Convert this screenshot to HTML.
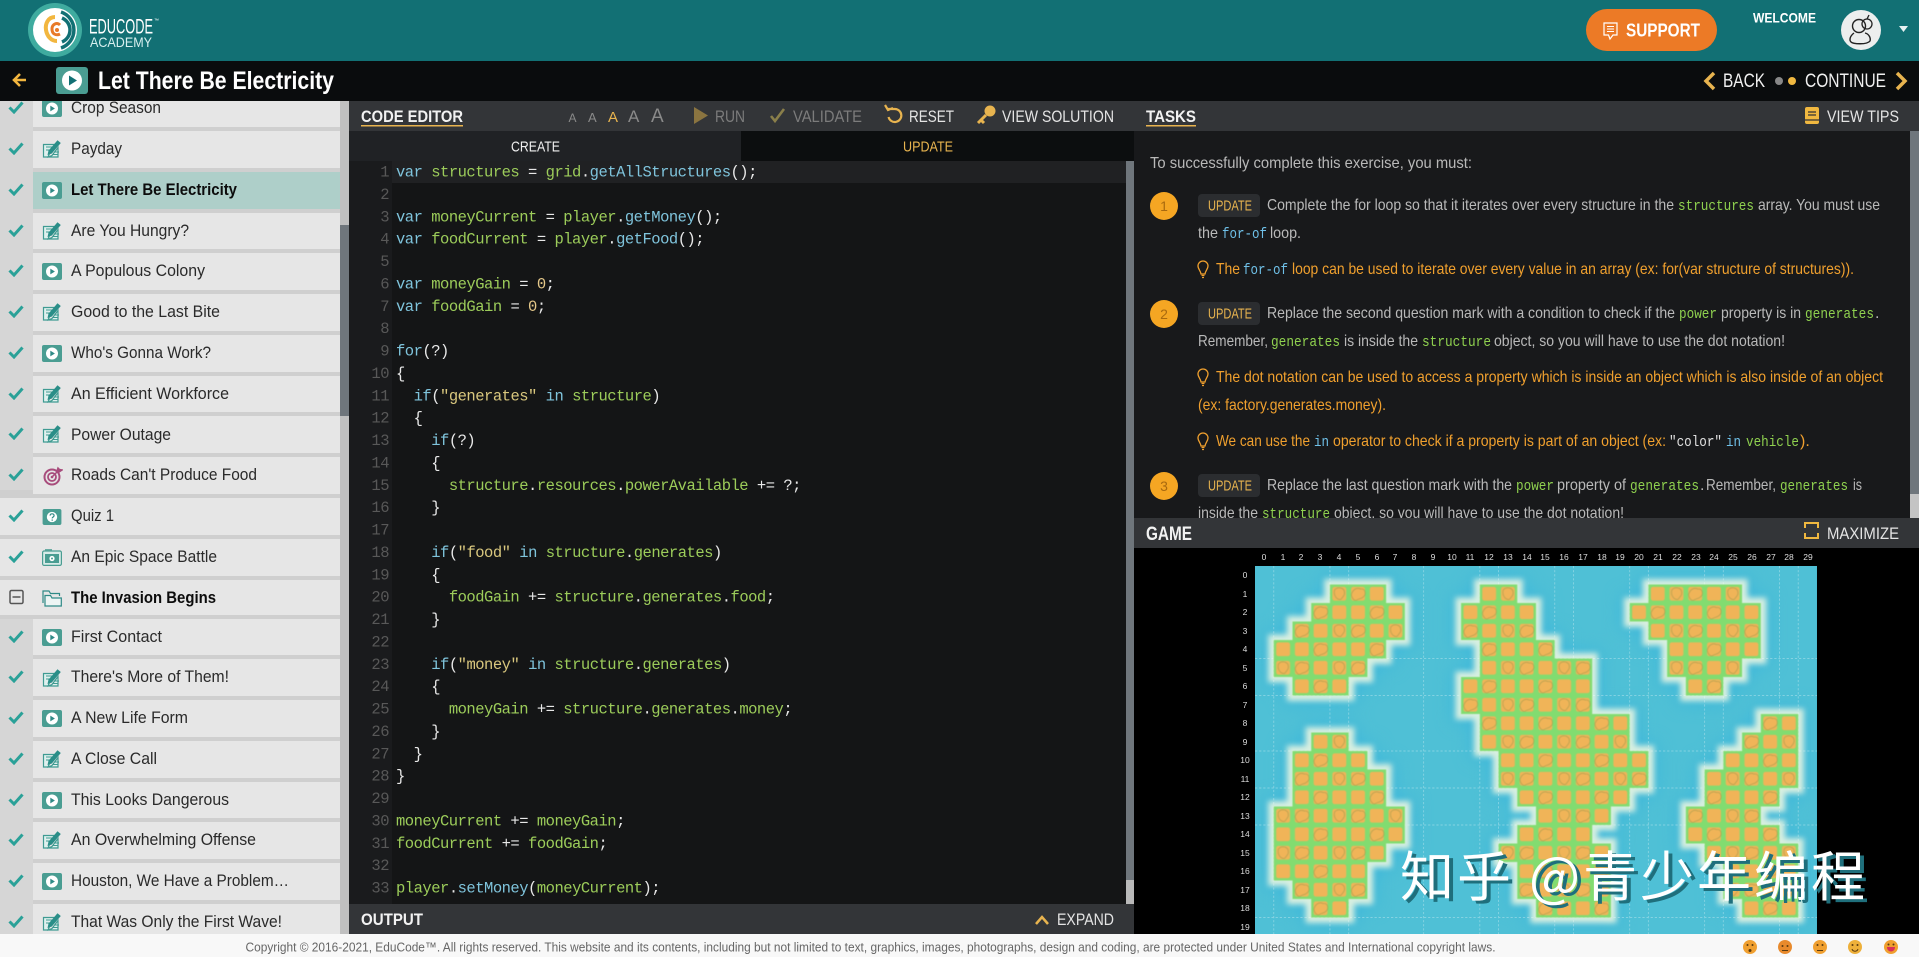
<!DOCTYPE html>
<html lang="en"><head><meta charset="utf-8"><title>Let There Be Electricity</title>
<style>
html,body{margin:0;padding:0;background:#000;width:1919px;height:957px;overflow:hidden}
svg{display:block;font-family:"Liberation Sans",sans-serif}
.it{font-size:17px;fill:#2a2a2a}
.b{font-weight:700;fill:#0c0c0c}
.c{font-family:"Liberation Mono",monospace;font-size:15.5px;letter-spacing:-.5px;fill:#e8e8e8;white-space:pre}
.n{font-family:"Liberation Mono",monospace;font-size:15.5px;letter-spacing:-.5px;fill:#585858;text-anchor:end}
.k{fill:#7fc4dc}.g{fill:#9ccc5a}.m{fill:#7fc4dc}.s{fill:#d9c77e}.v{fill:#e6c98a}
.h{font-size:17px;font-weight:700;fill:#f2f2f2}
.btn{font-size:17px;fill:#e4e4e4}
.dim{font-size:17px;fill:#7c7c7c}
.t{font-size:16px;fill:#b9b9b9}
.o{font-size:16px;fill:#f0a02e}
.cd{font-family:"Liberation Mono",monospace;font-size:15px}
.tg{fill:#8fd14f}.tk{fill:#6fc0e8}
.bd{font-size:14.5px;fill:#e8b44f}
.num{font-size:14px;fill:#a8690f;text-anchor:middle}
.gl{font-size:8.5px;fill:#ddd;text-anchor:middle}
</style></head><body>
<svg xmlns="http://www.w3.org/2000/svg" width="1919" height="957" viewBox="0 0 1919 957">
<defs>
<symbol id="play" viewBox="0 0 20 17"><rect width="20" height="17" rx="2" fill="#4a9d92"/><circle cx="10" cy="8.5" r="6" fill="#fff"/><path d="M8.3 5.6l4.6 2.9-4.6 2.9z" fill="#2f8a86"/></symbol>
<symbol id="edit" viewBox="0 0 20 20"><path d="M1.5 5.5h12l-6 9-1.5 3.500 4-1.500 6-8v9.500h-14.500z" fill="#dff0ee" stroke="#3f9b92" stroke-width="1.200"/><path d="M4 8h6M4 11h4M11 15.500h5M12 13h5" stroke="#3f9b92" stroke-width=".9" fill="none"/><path d="M15.500 1.200l3.300 2.800-9 10.500-4.300 1.500 1-4.400z" fill="#2a8e88"/></symbol>
<symbol id="target" viewBox="0 0 20 20"><circle cx="9" cy="11" r="7.500" fill="none" stroke="#a84c7c" stroke-width="2"/><circle cx="9" cy="11" r="4" fill="none" stroke="#a84c7c" stroke-width="1.800"/><circle cx="9" cy="11" r="1.300" fill="#a84c7c"/><path d="M9 11l7-7M14 5l1-3 1.500 1.500 2.500.5-3 2z" stroke="#a84c7c" stroke-width="1.500" fill="#a84c7c"/></symbol>
<symbol id="quiz" viewBox="0 0 20 17"><rect width="20" height="17" rx="2" fill="#4a9d92"/><circle cx="10" cy="8.500" r="5.500" fill="#fff"/><path d="M8 7c0-2.500 4.200-2.500 4.200 0 0 1.500-2 1.500-2 3M10.200 11.200v1.300" stroke="#2f8a86" stroke-width="1.300" fill="none"/></symbol>
<symbol id="video" viewBox="0 0 20 17"><rect x=".6" y="2" width="18.800" height="14.400" rx="1.500" fill="#d8ebe8" stroke="#4a9d92" stroke-width="1.200"/><rect x="3" y="5" width="14" height="9" fill="#4a9d92"/><circle cx="10" cy="9.500" r="2.600" fill="#fff"/><circle cx="10" cy="9.500" r="1" fill="#4a9d92"/><path d="M3 .8h7" stroke="#4a9d92" stroke-width="1.200"/></symbol>
<symbol id="folder" viewBox="0 0 20 18"><path d="M1 14V2h6l1.500 2.500h9V7" fill="none" stroke="#2f8a86" stroke-width="1.200"/><path d="M3 17V6.500h5.500l1.500 2.500h9.300v8z" fill="#edf5f4" stroke="#2f8a86" stroke-width="1.200"/></symbol>
<symbol id="chk" viewBox="0 0 16 13"><path d="M1.500 6.500l4.500 4.500 8.500-9.500" fill="none" stroke="#2aa198" stroke-width="3"/></symbol>
<symbol id="bulb" viewBox="0 0 12 19"><path d="M6 1a5 5 0 0 0-5 5c0 3 2.500 4.500 3 8h4c.5-3.500 3-5 3-8a5 5 0 0 0-5-5zM4.500 15.500h3M5 17.500h2" fill="none" stroke="#f0a02e" stroke-width="1.300"/></symbol>
<pattern id="cell" patternUnits="userSpaceOnUse" width="3" height="2">
<rect width="3" height="2" fill="#82dc70"/>
<rect x=".13" y=".13" width=".74" height=".74" rx=".12" fill="#f0b458"/><rect x="1.130" y=".13" width=".74" height=".74" rx=".12" fill="#f0b458"/><rect x="2.130" y=".13" width=".74" height=".74" rx=".12" fill="#f0b458"/>
<rect x=".13" y="1.130" width=".74" height=".74" rx=".12" fill="#f0b458"/><rect x="1.130" y="1.130" width=".74" height=".74" rx=".12" fill="#f0b458"/><rect x="2.130" y="1.130" width=".74" height=".74" rx=".12" fill="#f0b458"/>
<path d="M.14.55c.08-.28.3-.42.5-.3.22-.05.3.2.2.36-.15.2-.3.12-.42.24-.12.05-.25-.1-.28-.3zM2.140 1.550c.08-.28.3-.42.5-.3.22-.05.3.2.2.36-.15.2-.3.12-.42.24-.12.05-.25-.1-.28-.3zM1.250 1.300c.14-.18.38-.14.5 0 .1.28-.06.34-.16.5-.2.05-.42-.2-.34-.5z" fill="none" stroke="#a39a4c" stroke-opacity=".7" stroke-width=".045"/>
</pattern>
<g id="segs"><path d="M4 1h3v1h-3zM12 1h2v1h-2zM21 1h5v1h-5zM3 2h5v1h-5zM11 2h4v1h-4zM20 2h7v1h-7zM2 3h6v1h-6zM11 3h4v1h-4zM21 3h6v1h-6zM1 4h6v1h-6zM12 4h4v1h-4zM22 4h5v1h-5zM1 5h5v1h-5zM12 5h6v1h-6zM22 5h4v1h-4zM2 6h3v1h-3zM11 6h7v1h-7zM23 6h2v1h-2zM11 7h7v1h-7zM12 8h8v1h-8zM27 8h2v1h-2zM3 9h2v1h-2zM12 9h8v1h-8zM26 9h3v1h-3zM2 10h4v1h-4zM13 10h8v1h-8zM25 10h4v1h-4zM2 11h5v1h-5zM13 11h8v1h-8zM24 11h5v1h-5zM2 12h5v1h-5zM14 12h6v1h-6zM24 12h4v1h-4zM1 13h7v1h-7zM15 13h4v1h-4zM23 13h4v1h-4zM1 14h7v1h-7zM14 14h4v1h-4zM23 14h5v1h-5zM1 15h6v1h-6zM13 15h6v1h-6zM24 15h5v1h-5zM1 16h5v1h-5zM14 16h5v1h-5zM25 16h4v1h-4zM2 17h4v1h-4zM14 17h5v1h-5zM25 17h4v1h-4zM3 18h2v1h-2zM15 18h4v1h-4zM26 18h3v1h-3z"/></g>
<filter id="bl" x="-5%" y="-5%" width="110%" height="110%" color-interpolation-filters="sRGB"><feGaussianBlur stdDeviation=".16"/></filter>
<filter id="bl2" x="-5%" y="-5%" width="110%" height="110%" color-interpolation-filters="sRGB"><feGaussianBlur stdDeviation=".5"/></filter>
<filter id="bl3" x="-2%" y="-2%" width="104%" height="104%" color-interpolation-filters="sRGB"><feGaussianBlur stdDeviation=".03"/></filter>
<clipPath id="side"><rect x="0" y="101" width="349" height="833"/></clipPath>
<clipPath id="task"><rect x="1134" y="131" width="785" height="387"/></clipPath>
<clipPath id="map"><rect x="0" y="0" width="30" height="19.900"/></clipPath>
</defs>

<rect width="1919" height="957" fill="#000"/>

<!-- sidebar -->
<g clip-path="url(#side)">
<rect y="101" width="349" height="833" fill="#cfcfcf"/>
<rect x="340" y="101" width="9" height="833" fill="#c0c0c0"/>
<rect x="340" y="225" width="9" height="191" fill="#6f767c"/>
<rect x="0" y="90" width="33" height="400" fill="#d6d6d6"/><rect x="0" y="619" width="33" height="320" fill="#d6d6d6"/>
<g fill="#e6e6e6">
<rect x="33" y="90" width="307" height="37"/><rect x="33" y="131" width="307" height="37"/><rect x="33" y="213" width="307" height="36"/><rect x="33" y="253" width="307" height="37"/><rect x="33" y="294" width="307" height="37"/><rect x="33" y="335" width="307" height="37"/><rect x="33" y="376" width="307" height="36"/><rect x="33" y="416" width="307" height="37"/><rect x="33" y="457" width="307" height="37"/>
<rect x="0" y="498" width="340" height="37"/><rect x="0" y="539" width="340" height="37"/><rect x="0" y="580" width="340" height="35"/>
<rect x="33" y="619" width="307" height="36"/><rect x="33" y="659" width="307" height="37"/><rect x="33" y="700" width="307" height="37"/><rect x="33" y="741" width="307" height="37"/><rect x="33" y="782" width="307" height="36"/><rect x="33" y="822" width="307" height="37"/><rect x="33" y="863" width="307" height="37"/><rect x="33" y="904" width="307" height="37"/>
</g>
<rect x="33" y="172" width="307" height="37" fill="#aecfc9"/>
<use href="#chk" x="8" y="101" width="16" height="13"/><use href="#chk" x="8" y="142" width="16" height="13"/><use href="#chk" x="8" y="183" width="16" height="13"/><use href="#chk" x="8" y="224" width="16" height="13"/><use href="#chk" x="8" y="264" width="16" height="13"/><use href="#chk" x="8" y="305" width="16" height="13"/><use href="#chk" x="8" y="346" width="16" height="13"/><use href="#chk" x="8" y="387" width="16" height="13"/><use href="#chk" x="8" y="427" width="16" height="13"/><use href="#chk" x="8" y="468" width="16" height="13"/><use href="#chk" x="8" y="509" width="16" height="13"/><use href="#chk" x="8" y="550" width="16" height="13"/><use href="#chk" x="8" y="630" width="16" height="13"/><use href="#chk" x="8" y="670" width="16" height="13"/><use href="#chk" x="8" y="711" width="16" height="13"/><use href="#chk" x="8" y="752" width="16" height="13"/><use href="#chk" x="8" y="793" width="16" height="13"/><use href="#chk" x="8" y="833" width="16" height="13"/><use href="#chk" x="8" y="874" width="16" height="13"/><use href="#chk" x="8" y="915" width="16" height="13"/>
<rect x="10" y="590.500" width="13" height="13" rx="1.500" fill="none" stroke="#555" stroke-width="1.500"/><path d="M12.500 597h8" stroke="#555" stroke-width="1.500"/>
<use href="#play" x="42" y="100" width="20" height="17"/><use href="#edit" x="42" y="139" width="20" height="20"/><use href="#play" x="42" y="182" width="20" height="17"/><use href="#edit" x="42" y="221" width="20" height="20"/><use href="#play" x="42" y="263" width="20" height="17"/><use href="#edit" x="42" y="302" width="20" height="20"/><use href="#play" x="42" y="345" width="20" height="17"/><use href="#edit" x="42" y="384" width="20" height="20"/><use href="#edit" x="42" y="424" width="20" height="20"/><use href="#target" x="43" y="466" width="20" height="20"/><use href="#quiz" x="42" y="509" width="20" height="16"/><use href="#video" x="42" y="549" width="20" height="17"/><use href="#folder" x="42" y="589" width="20" height="18"/><use href="#play" x="42" y="629" width="20" height="17"/><use href="#edit" x="42" y="668" width="20" height="20"/><use href="#play" x="42" y="710" width="20" height="17"/><use href="#edit" x="42" y="749" width="20" height="20"/><use href="#play" x="42" y="792" width="20" height="17"/><use href="#edit" x="42" y="830" width="20" height="20"/><use href="#play" x="42" y="873" width="20" height="17"/><use href="#edit" x="42" y="912" width="20" height="20"/>
<text class="it" x="71" y="113" textLength="90" lengthAdjust="spacingAndGlyphs">Crop Season</text>
<text class="it" x="71" y="154" textLength="51" lengthAdjust="spacingAndGlyphs">Payday</text>
<text class="it b" x="71" y="195" textLength="166" lengthAdjust="spacingAndGlyphs">Let There Be Electricity</text>
<text class="it" x="71" y="236" textLength="118" lengthAdjust="spacingAndGlyphs">Are You Hungry?</text>
<text class="it" x="71" y="276" textLength="134" lengthAdjust="spacingAndGlyphs">A Populous Colony</text>
<text class="it" x="71" y="317" textLength="149" lengthAdjust="spacingAndGlyphs">Good to the Last Bite</text>
<text class="it" x="71" y="358" textLength="140" lengthAdjust="spacingAndGlyphs">Who's Gonna Work?</text>
<text class="it" x="71" y="399" textLength="158" lengthAdjust="spacingAndGlyphs">An Efficient Workforce</text>
<text class="it" x="71" y="440" textLength="100" lengthAdjust="spacingAndGlyphs">Power Outage</text>
<text class="it" x="71" y="480" textLength="186" lengthAdjust="spacingAndGlyphs">Roads Can't Produce Food</text>
<text class="it" x="71" y="521" textLength="43" lengthAdjust="spacingAndGlyphs">Quiz 1</text>
<text class="it" x="71" y="562" textLength="146" lengthAdjust="spacingAndGlyphs">An Epic Space Battle</text>
<text class="it b" x="71" y="603" textLength="145" lengthAdjust="spacingAndGlyphs">The Invasion Begins</text>
<text class="it" x="71" y="642" textLength="91" lengthAdjust="spacingAndGlyphs">First Contact</text>
<text class="it" x="71" y="682" textLength="158" lengthAdjust="spacingAndGlyphs">There's More of Them!</text>
<text class="it" x="71" y="723" textLength="117" lengthAdjust="spacingAndGlyphs">A New Life Form</text>
<text class="it" x="71" y="764" textLength="86" lengthAdjust="spacingAndGlyphs">A Close Call</text>
<text class="it" x="71" y="805" textLength="158" lengthAdjust="spacingAndGlyphs">This Looks Dangerous</text>
<text class="it" x="71" y="845" textLength="185" lengthAdjust="spacingAndGlyphs">An Overwhelming Offense</text>
<text class="it" x="71" y="886" textLength="218" lengthAdjust="spacingAndGlyphs">Houston, We Have a Problem…</text>
<text class="it" x="71" y="927" textLength="211" lengthAdjust="spacingAndGlyphs">That Was Only the First Wave!</text>
</g>

<!-- top bars -->
<rect width="1919" height="61" fill="#127074"/>
<rect y="61" width="1919" height="40" fill="#0a0c0d"/>
<circle cx="55" cy="30" r="27" fill="#3fab9f"/>
<circle cx="55" cy="30" r="22" fill="#fff"/>
<path d="M61 12a19 19 0 0 1 0 36M62 18a13 13 0 0 1 0 24" fill="none" stroke="#127074" stroke-width="3.500"/>
<path d="M55 17c-7 0-10 7-9 13s5 11 11 11" fill="none" stroke="#f2b63f" stroke-width="4"/>
<path d="M60 25c-3-3-8-1-8 4s4 7 8 5" fill="none" stroke="#e87a28" stroke-width="3"/>
<circle cx="57" cy="30" r="2" fill="#e87a28"/>
<text x="89" y="33.500" font-size="21" fill="#fff" textLength="64" lengthAdjust="spacingAndGlyphs">EDUCODE</text>
<text x="154" y="22" font-size="5" fill="#fff">™</text>
<text x="90" y="47" font-size="14" fill="#d8efef" textLength="62" lengthAdjust="spacingAndGlyphs">ACADEMY</text>

<rect x="1586" y="9" width="131" height="42" rx="21" fill="#ec7a26"/>
<path d="M1604 23h13v12h-4l-3 4-1.500-4h-4.500z" fill="none" stroke="#fff" stroke-width="1.200"/><path d="M1607 26.500h7M1607 29h7M1607 31.500h7" stroke="#fff" stroke-width="1"/>
<text x="1626" y="36.500" font-size="18" font-weight="700" fill="#fff" textLength="74" lengthAdjust="spacingAndGlyphs">SUPPORT</text>
<text x="1753" y="22.500" font-size="13.500" font-weight="700" fill="#fff" textLength="63" lengthAdjust="spacingAndGlyphs">WELCOME</text>
<circle cx="1861" cy="30" r="20" fill="#eceeee"/>
<circle cx="1859" cy="26" r="6.500" fill="none" stroke="#222" stroke-width="1.400"/><path d="M1854 33c-4 3-5 7-3 9s16 3 19-1c1-3-1-7-5-8" fill="none" stroke="#222" stroke-width="1.400"/><circle cx="1867" cy="24" r="5" fill="none" stroke="#222" stroke-width="1.300"/><path d="M1867 19l2-4" stroke="#222" stroke-width="1.300"/>
<path d="M1899 26h9l-4.500 6z" fill="#e6f2f2"/>

<path d="M26 80H14M20 74l-6 6 6 6" fill="none" stroke="#f3b73f" stroke-width="2.600"/>
<rect x="56" y="67" width="32" height="27" rx="3" fill="#4a9d92"/><circle cx="72" cy="80.500" r="10" fill="#fff"/><path d="M69 75.500l8 5-8 5z" fill="#127074"/>
<text x="98" y="89" font-size="25" font-weight="700" fill="#fff" textLength="236" lengthAdjust="spacingAndGlyphs">Let There Be Electricity</text>
<path d="M1714 73l-8 8 8 8" fill="none" stroke="#e8b44f" stroke-width="3.500"/>
<text x="1723" y="87" font-size="19" fill="#f0f0f0" textLength="42" lengthAdjust="spacingAndGlyphs">BACK</text>
<circle cx="1779" cy="81" r="4" fill="#888"/><circle cx="1792" cy="81" r="4" fill="#f0b840"/>
<text x="1805" y="87" font-size="19" fill="#f0f0f0" textLength="81" lengthAdjust="spacingAndGlyphs">CONTINUE</text>
<path d="M1897 73l8 8-8 8" fill="none" stroke="#e8b44f" stroke-width="3.500"/>

<!-- editor -->
<rect x="349" y="101" width="1570" height="30" fill="#333538"/>
<text class="h" x="361" y="122" textLength="102" lengthAdjust="spacingAndGlyphs">CODE EDITOR</text>
<rect x="361" y="125" width="102" height="1.500" fill="#e8b44f"/>
<text x="568.500" y="122" font-size="12" fill="#8a8a8a">A</text>
<text x="588" y="122" font-size="13" fill="#8a8a8a">A</text>
<text x="608" y="122" font-size="15" fill="#e8b44f">A</text>
<text x="628" y="122" font-size="17" fill="#8a8a8a">A</text>
<text x="651" y="122" font-size="19" fill="#8a8a8a">A</text>
<path d="M694 107l14 8.500-14 8.500z" fill="#8a7440"/>
<text class="dim" x="715" y="122" textLength="30" lengthAdjust="spacingAndGlyphs">RUN</text>
<path d="M771 116l4 5 9-12" fill="none" stroke="#8a7f4a" stroke-width="2.600"/>
<text class="dim" x="793" y="122" textLength="69" lengthAdjust="spacingAndGlyphs">VALIDATE</text>
<path d="M888 109h7a6.500 6.500 0 1 1-6.500 8M885 105l3 5 5-2" fill="none" stroke="#e8b44f" stroke-width="2.200"/>
<text class="btn" x="909" y="122" textLength="45" lengthAdjust="spacingAndGlyphs">RESET</text>
<circle cx="990" cy="111" r="5.500" fill="#e8b44f"/><path d="M986 115l-8 8M981 120l3 3" stroke="#e8b44f" stroke-width="3"/>
<text class="btn" x="1002" y="122" textLength="112" lengthAdjust="spacingAndGlyphs">VIEW SOLUTION</text>

<rect x="349" y="131" width="392" height="30" fill="#202225"/>
<rect x="741" y="131" width="393" height="30" fill="#0c0e0f"/>
<text x="511" y="151.500" font-size="15" fill="#f0f0f0" textLength="49" lengthAdjust="spacingAndGlyphs">CREATE</text>
<text x="903" y="151.500" font-size="15" fill="#e8b44f" textLength="50" lengthAdjust="spacingAndGlyphs">UPDATE</text>

<rect x="349" y="161" width="785" height="743" fill="#141516"/>
<rect x="349" y="161" width="43" height="743" fill="#1a1b1d"/>
<rect x="392" y="161" width="734" height="22" fill="#202123"/>
<rect x="1126" y="161" width="8" height="719" fill="#6f767c"/><rect x="1126" y="880" width="8" height="24" fill="#b9b9b9"/>
<g transform="translate(0 -1)">
<text class="n" x="389" y="177.500">1</text><text class="n" x="389" y="199.900">2</text><text class="n" x="389" y="222.300">3</text><text class="n" x="389" y="244.600">4</text><text class="n" x="389" y="267">5</text><text class="n" x="389" y="289.400">6</text><text class="n" x="389" y="311.800">7</text><text class="n" x="389" y="334.200">8</text><text class="n" x="389" y="356.500">9</text><text class="n" x="389" y="378.900">10</text><text class="n" x="389" y="401.300">11</text><text class="n" x="389" y="423.700">12</text><text class="n" x="389" y="446">13</text><text class="n" x="389" y="468.400">14</text><text class="n" x="389" y="490.800">15</text><text class="n" x="389" y="513.200">16</text><text class="n" x="389" y="535.600">17</text><text class="n" x="389" y="557.900">18</text><text class="n" x="389" y="580.300">19</text><text class="n" x="389" y="602.700">20</text><text class="n" x="389" y="625.100">21</text><text class="n" x="389" y="647.400">22</text><text class="n" x="389" y="669.800">23</text><text class="n" x="389" y="692.200">24</text><text class="n" x="389" y="714.600">25</text><text class="n" x="389" y="737">26</text><text class="n" x="389" y="759.300">27</text><text class="n" x="389" y="781.700">28</text><text class="n" x="389" y="804.100">29</text><text class="n" x="389" y="826.500">30</text><text class="n" x="389" y="848.800">31</text><text class="n" x="389" y="871.200">32</text><text class="n" x="389" y="893.600">33</text>
<text class="c" x="396" y="177.500" xml:space="preserve"><tspan class="k">var</tspan> <tspan class="g">structures</tspan> = <tspan class="g">grid</tspan>.<tspan class="m">getAllStructures</tspan>();</text>
<text class="c" x="396" y="222.300" xml:space="preserve"><tspan class="k">var</tspan> <tspan class="g">moneyCurrent</tspan> = <tspan class="g">player</tspan>.<tspan class="m">getMoney</tspan>();</text>
<text class="c" x="396" y="244.600" xml:space="preserve"><tspan class="k">var</tspan> <tspan class="g">foodCurrent</tspan> = <tspan class="g">player</tspan>.<tspan class="m">getFood</tspan>();</text>
<text class="c" x="396" y="289.400" xml:space="preserve"><tspan class="k">var</tspan> <tspan class="g">moneyGain</tspan> = <tspan class="v">0</tspan>;</text>
<text class="c" x="396" y="311.800" xml:space="preserve"><tspan class="k">var</tspan> <tspan class="g">foodGain</tspan> = <tspan class="v">0</tspan>;</text>
<text class="c" x="396" y="356.500" xml:space="preserve"><tspan class="k">for</tspan>(?)</text>
<text class="c" x="396" y="378.900" xml:space="preserve">{</text>
<text class="c" x="396" y="401.300" xml:space="preserve">  <tspan class="k">if</tspan>(<tspan class="s">"generates"</tspan> <tspan class="k">in</tspan> <tspan class="g">structure</tspan>)</text>
<text class="c" x="396" y="423.700" xml:space="preserve">  {</text>
<text class="c" x="396" y="446" xml:space="preserve">    <tspan class="k">if</tspan>(?)</text>
<text class="c" x="396" y="468.400" xml:space="preserve">    {</text>
<text class="c" x="396" y="490.800" xml:space="preserve">      <tspan class="g">structure</tspan>.<tspan class="g">resources</tspan>.<tspan class="g">powerAvailable</tspan> += ?;</text>
<text class="c" x="396" y="513.200" xml:space="preserve">    }</text>
<text class="c" x="396" y="557.900" xml:space="preserve">    <tspan class="k">if</tspan>(<tspan class="s">"food"</tspan> <tspan class="k">in</tspan> <tspan class="g">structure</tspan>.<tspan class="g">generates</tspan>)</text>
<text class="c" x="396" y="580.300" xml:space="preserve">    {</text>
<text class="c" x="396" y="602.700" xml:space="preserve">      <tspan class="g">foodGain</tspan> += <tspan class="g">structure</tspan>.<tspan class="g">generates</tspan>.<tspan class="g">food</tspan>;</text>
<text class="c" x="396" y="625.100" xml:space="preserve">    }</text>
<text class="c" x="396" y="669.800" xml:space="preserve">    <tspan class="k">if</tspan>(<tspan class="s">"money"</tspan> <tspan class="k">in</tspan> <tspan class="g">structure</tspan>.<tspan class="g">generates</tspan>)</text>
<text class="c" x="396" y="692.200" xml:space="preserve">    {</text>
<text class="c" x="396" y="714.600" xml:space="preserve">      <tspan class="g">moneyGain</tspan> += <tspan class="g">structure</tspan>.<tspan class="g">generates</tspan>.<tspan class="g">money</tspan>;</text>
<text class="c" x="396" y="737" xml:space="preserve">    }</text>
<text class="c" x="396" y="759.300" xml:space="preserve">  }</text>
<text class="c" x="396" y="781.700" xml:space="preserve">}</text>
<text class="c" x="396" y="826.500" xml:space="preserve"><tspan class="g">moneyCurrent</tspan> += <tspan class="g">moneyGain</tspan>;</text>
<text class="c" x="396" y="848.800" xml:space="preserve"><tspan class="g">foodCurrent</tspan> += <tspan class="g">foodGain</tspan>;</text>
<text class="c" x="396" y="893.600" xml:space="preserve"><tspan class="g">player</tspan>.<tspan class="m">setMoney</tspan>(<tspan class="g">moneyCurrent</tspan>);</text>
</g>

<rect x="349" y="904" width="785" height="30" fill="#333538"/>
<text class="h" x="361" y="925" textLength="62" lengthAdjust="spacingAndGlyphs">OUTPUT</text>
<path d="M1036 924l6-7 6 7" fill="none" stroke="#e8b44f" stroke-width="2.500"/>
<text class="btn" x="1057" y="925" textLength="57" lengthAdjust="spacingAndGlyphs">EXPAND</text>

<!-- tasks -->
<text class="h" x="1146" y="122" textLength="50" lengthAdjust="spacingAndGlyphs">TASKS</text>
<rect x="1146" y="125" width="50" height="1.500" fill="#e8b44f"/>
<rect x="1805" y="107" width="14" height="17" rx="2" fill="#f0b840"/><path d="M1808 112h8M1808 115h8M1805 120h14" stroke="#333" stroke-width="1.200"/>
<text class="btn" x="1827" y="122" textLength="72" lengthAdjust="spacingAndGlyphs">VIEW TIPS</text>

<rect x="1134" y="131" width="785" height="387" fill="#18191b"/>
<rect x="1910" y="131" width="9" height="363" fill="#6f767c"/><rect x="1910" y="494" width="9" height="24" fill="#c4c4c4"/>
<g clip-path="url(#task)">
<text class="t" x="1150" y="168" textLength="322" lengthAdjust="spacingAndGlyphs">To successfully complete this exercise, you must:</text>

<circle cx="1164" cy="206" r="14" fill="#f5a623"/><text class="num" x="1164" y="211">1</text>
<rect x="1198" y="194" width="62" height="23" rx="4" fill="#2b2d30"/><text class="bd" x="1208" y="210.500" textLength="44" lengthAdjust="spacingAndGlyphs">UPDATE</text>
<text class="t" x="1267" y="210" textLength="407" lengthAdjust="spacingAndGlyphs">Complete the for loop so that it iterates over every structure in the</text>
<text class="cd tg" x="1678" y="210" textLength="76" lengthAdjust="spacingAndGlyphs">structures</text>
<text class="t" x="1758" y="210" textLength="122" lengthAdjust="spacingAndGlyphs">array. You must use</text>
<text class="t" x="1198" y="238" textLength="20" lengthAdjust="spacingAndGlyphs">the</text>
<text class="cd tk" x="1222" y="238" textLength="45" lengthAdjust="spacingAndGlyphs">for-of</text>
<text class="t" x="1270" y="238" textLength="31" lengthAdjust="spacingAndGlyphs">loop.</text>
<use href="#bulb" x="1197" y="260" width="12" height="19"/>
<text class="o" x="1216" y="274" textLength="24" lengthAdjust="spacingAndGlyphs">The</text>
<text class="cd tk" x="1243" y="274" textLength="45" lengthAdjust="spacingAndGlyphs">for-of</text>
<text class="o" x="1292" y="274" textLength="562" lengthAdjust="spacingAndGlyphs">loop can be used to iterate over every value in an array (ex: for(var structure of structures)).</text>

<circle cx="1164" cy="314" r="14" fill="#f5a623"/><text class="num" x="1164" y="319">2</text>
<rect x="1198" y="302" width="62" height="23" rx="4" fill="#2b2d30"/><text class="bd" x="1208" y="318.500" textLength="44" lengthAdjust="spacingAndGlyphs">UPDATE</text>
<text class="t" x="1267" y="318" textLength="408" lengthAdjust="spacingAndGlyphs">Replace the second question mark with a condition to check if the</text>
<text class="cd tg" x="1679" y="318" textLength="38" lengthAdjust="spacingAndGlyphs">power</text>
<text class="t" x="1721" y="318" textLength="80" lengthAdjust="spacingAndGlyphs">property is in</text>
<text class="cd tg" x="1805" y="318" textLength="69" lengthAdjust="spacingAndGlyphs">generates</text>
<text class="t" x="1875" y="318">.</text>
<text class="t" x="1198" y="346" textLength="70" lengthAdjust="spacingAndGlyphs">Remember,</text>
<text class="cd tg" x="1271" y="346" textLength="69" lengthAdjust="spacingAndGlyphs">generates</text>
<text class="t" x="1344" y="346" textLength="74" lengthAdjust="spacingAndGlyphs">is inside the</text>
<text class="cd tg" x="1422" y="346" textLength="69" lengthAdjust="spacingAndGlyphs">structure</text>
<text class="t" x="1494" y="346" textLength="291" lengthAdjust="spacingAndGlyphs">object, so you will have to use the dot notation!</text>
<use href="#bulb" x="1197" y="368" width="12" height="19"/>
<text class="o" x="1216" y="382" textLength="667" lengthAdjust="spacingAndGlyphs">The dot notation can be used to access a property which is inside an object which is also inside of an object</text>
<text class="o" x="1198" y="410" textLength="188" lengthAdjust="spacingAndGlyphs">(ex: factory.generates.money).</text>
<use href="#bulb" x="1197" y="432" width="12" height="19"/>
<text class="o" x="1216" y="446" textLength="94" lengthAdjust="spacingAndGlyphs">We can use the</text>
<text class="cd tk" x="1314" y="446" textLength="15" lengthAdjust="spacingAndGlyphs">in</text>
<text class="o" x="1333" y="446" textLength="333" lengthAdjust="spacingAndGlyphs">operator to check if a property is part of an object (ex:</text>
<text class="cd" fill="#e0e0e0" x="1669" y="446" textLength="53" lengthAdjust="spacingAndGlyphs">"color"</text>
<text class="cd tk" x="1726" y="446" textLength="15" lengthAdjust="spacingAndGlyphs">in</text>
<text class="cd tg" x="1746" y="446" textLength="53" lengthAdjust="spacingAndGlyphs">vehicle</text>
<text class="o" x="1800" y="446">).</text>

<circle cx="1164" cy="486" r="14" fill="#f5a623"/><text class="num" x="1164" y="491">3</text>
<rect x="1198" y="474" width="62" height="23" rx="4" fill="#2b2d30"/><text class="bd" x="1208" y="490.500" textLength="44" lengthAdjust="spacingAndGlyphs">UPDATE</text>
<text class="t" x="1267" y="490" textLength="245" lengthAdjust="spacingAndGlyphs">Replace the last question mark with the</text>
<text class="cd tg" x="1516" y="490" textLength="38" lengthAdjust="spacingAndGlyphs">power</text>
<text class="t" x="1557" y="490" textLength="69" lengthAdjust="spacingAndGlyphs">property of</text>
<text class="cd tg" x="1630" y="490" textLength="69" lengthAdjust="spacingAndGlyphs">generates</text>
<text class="t" x="1700" y="490">.</text>
<text class="t" x="1706" y="490" textLength="70" lengthAdjust="spacingAndGlyphs">Remember,</text>
<text class="cd tg" x="1780" y="490" textLength="68" lengthAdjust="spacingAndGlyphs">generates</text>
<text class="t" x="1853" y="490" textLength="9" lengthAdjust="spacingAndGlyphs">is</text>
<text class="t" x="1198" y="518" textLength="60" lengthAdjust="spacingAndGlyphs">inside the</text>
<text class="cd tg" x="1262" y="518" textLength="68" lengthAdjust="spacingAndGlyphs">structure</text>
<text class="t" x="1334" y="518" textLength="290" lengthAdjust="spacingAndGlyphs">object, so you will have to use the dot notation!</text>
</g>

<!-- game -->
<rect x="1134" y="518" width="785" height="30" fill="#333538"/>
<text class="h" x="1146" y="540" style="font-size:19px" textLength="46" lengthAdjust="spacingAndGlyphs">GAME</text>
<path d="M1805 528v-5h13v5M1805 533v5h13v-5" fill="none" stroke="#f0b840" stroke-width="2"/>
<text class="btn" x="1827" y="539" textLength="72" lengthAdjust="spacingAndGlyphs">MAXIMIZE</text>
<rect x="1134" y="548" width="785" height="386" fill="#000"/>
<g class="gl"><text class="gl" x="1264" y="560">0</text><text class="gl" x="1283" y="560">1</text><text class="gl" x="1301" y="560">2</text><text class="gl" x="1320" y="560">3</text><text class="gl" x="1339" y="560">4</text><text class="gl" x="1358" y="560">5</text><text class="gl" x="1377" y="560">6</text><text class="gl" x="1395" y="560">7</text><text class="gl" x="1414" y="560">8</text><text class="gl" x="1433" y="560">9</text><text class="gl" x="1452" y="560">10</text><text class="gl" x="1470" y="560">11</text><text class="gl" x="1489" y="560">12</text><text class="gl" x="1508" y="560">13</text><text class="gl" x="1527" y="560">14</text><text class="gl" x="1545" y="560">15</text><text class="gl" x="1564" y="560">16</text><text class="gl" x="1583" y="560">17</text><text class="gl" x="1602" y="560">18</text><text class="gl" x="1620" y="560">19</text><text class="gl" x="1639" y="560">20</text><text class="gl" x="1658" y="560">21</text><text class="gl" x="1677" y="560">22</text><text class="gl" x="1696" y="560">23</text><text class="gl" x="1714" y="560">24</text><text class="gl" x="1733" y="560">25</text><text class="gl" x="1752" y="560">26</text><text class="gl" x="1771" y="560">27</text><text class="gl" x="1789" y="560">28</text><text class="gl" x="1808" y="560">29</text>
<text class="gl" x="1245" y="578">0</text><text class="gl" x="1245" y="597">1</text><text class="gl" x="1245" y="615">2</text><text class="gl" x="1245" y="634">3</text><text class="gl" x="1245" y="652">4</text><text class="gl" x="1245" y="671">5</text><text class="gl" x="1245" y="689">6</text><text class="gl" x="1245" y="708">7</text><text class="gl" x="1245" y="726">8</text><text class="gl" x="1245" y="745">9</text><text class="gl" x="1245" y="763">10</text><text class="gl" x="1245" y="782">11</text><text class="gl" x="1245" y="800">12</text><text class="gl" x="1245" y="819">13</text><text class="gl" x="1245" y="837">14</text><text class="gl" x="1245" y="856">15</text><text class="gl" x="1245" y="874">16</text><text class="gl" x="1245" y="893">17</text><text class="gl" x="1245" y="911">18</text><text class="gl" x="1245" y="930">19</text></g>
<g transform="translate(1255 566) scale(18.733 18.5)">
<g clip-path="url(#map)">
<rect width="30" height="20" fill="#4fc0d6"/>
<use href="#segs" fill="#3ab6dc" stroke="#3ab6dc" stroke-width=".7" filter="url(#bl2)"/>
<use href="#segs" fill="#d8efe0" stroke="#d8efe0" stroke-width=".6" filter="url(#bl)"/>
<path d="M1 0v20M4 0v20M5 0v20M9 0v20M12 0v20M13 0v20M16 0v20M17 0v20M20 0v20M21 0v20M24 0v20M25 0v20M28 0v20M29 0v20M0 5h30M0 7h30M0 10h30M0 12h30M0 14h30M0 19h30" stroke="#fff" stroke-opacity=".3" stroke-width=".05" stroke-dasharray=".12 .1" fill="none"/>
<use href="#segs" fill="url(#cell)" filter="url(#bl3)"/>
</g>
</g>
<text x="1404" y="899" font-family="'Noto Sans CJK SC',sans-serif" font-size="54" fill="#1f6f7c" textLength="465" lengthAdjust="spacing">知乎 @青少年编程</text>
<text x="1400" y="896" font-family="'Noto Sans CJK SC',sans-serif" font-size="54" fill="#fff" textLength="465" lengthAdjust="spacing">知乎 @青少年编程</text>

<!-- footer -->
<rect y="934" width="1919" height="23" fill="#f8f8f8"/>
<text x="245.500" y="951.500" font-size="13" fill="#666" textLength="1250" lengthAdjust="spacingAndGlyphs">Copyright © 2016-2021, EduCode™. All rights reserved. This website and its contents, including but not limited to text, graphics, images, photographs, design and coding, are protected under United States and International copyright laws.</text>
<g fill="#f0a030"><circle cx="1750" cy="947" r="7"/><circle cx="1785" cy="947" r="7" fill="#e88a2c"/><circle cx="1820" cy="947" r="7"/><circle cx="1855" cy="947" r="7" fill="#eeb03a"/><circle cx="1891" cy="947" r="7"/></g>
<g fill="#5a3a10"><circle cx="1747.500" cy="945" r="1"/><circle cx="1752.500" cy="945" r="1"/><circle cx="1750" cy="950.500" r="1.500"/><circle cx="1782.500" cy="946" r="1"/><circle cx="1787.500" cy="946" r="1"/><rect x="1782" y="950" width="6" height="1"/><circle cx="1817.500" cy="945" r="1"/><circle cx="1822.500" cy="945" r="1"/><rect x="1817" y="950" width="6" height="1"/><circle cx="1852.500" cy="945" r="1"/><circle cx="1857.500" cy="945" r="1"/><circle cx="1888.500" cy="944.500" r="1"/><circle cx="1893.500" cy="944.500" r="1"/></g>
<path d="M1852 949c1 3 5 3 6 0" fill="none" stroke="#5a3a10" stroke-width="1"/>
<path d="M1887 947h8c0 6-8 6-8 0z" fill="#d8305a"/>
</svg>
</body></html>
